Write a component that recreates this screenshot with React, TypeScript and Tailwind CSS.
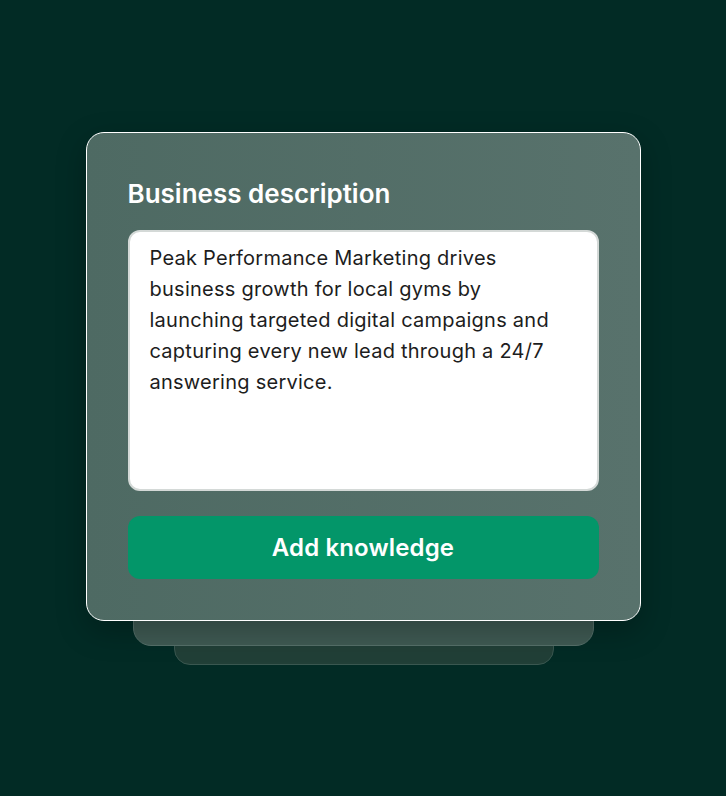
export default function App() {
  return (
    <div
      className="w-[726px] h-[796px] bg-[#022b25] pt-[132px] flex justify-center"
      style={{ fontFamily: "Inter, 'Noto Sans', sans-serif" }}
    >
      <div className="relative w-[555px] h-[489px]">
        {/* stacked cards behind */}
        <div className="absolute left-[88px] right-[87px] top-[40px] h-[493px] rounded-[16px] bg-[#213f37] border border-[#3a5750]" />
        <div className="absolute left-[47px] right-[47px] top-[20px] h-[494px] rounded-[18px] bg-[#3f5a53] border border-[#56706a]" />

        <div className="relative h-full rounded-[18px] border-[1.5px] border-white bg-gradient-to-r from-[#4e6a63] to-[#58726c] px-[41px] pt-[45px] shadow-[0_10px_30px_rgba(0,0,0,0.25)]">
          <h2 className="text-[26px] leading-[32px] font-semibold text-white">
            Business description
          </h2>
          <div className="mt-[20px] h-[261px] rounded-[12px] bg-white border-2 border-[#d4d9d7] pl-[20px] pr-[40px] pt-[11px]">
            <p className="text-[20px] leading-[31px] tracking-[0.25px] text-[#1d1d1d]">
              Peak Performance Marketing drives business growth for local gyms by launching targeted digital campaigns and capturing every new lead through a 24/7 answering service.
            </p>
          </div>
          <button className="mt-[25px] w-full h-[63px] rounded-[12px] bg-[#039669] text-white text-[24px] tracking-[0.15px] font-semibold flex items-center justify-center">
            Add knowledge
          </button>
        </div>
      </div>
    </div>
  );
}
